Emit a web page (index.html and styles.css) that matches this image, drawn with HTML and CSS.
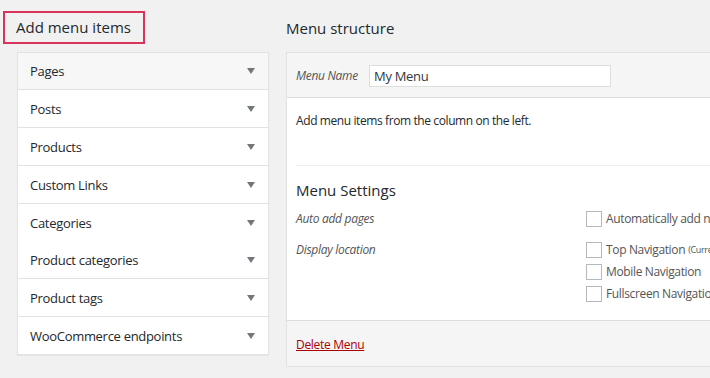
FILE: index.html
```html
<!DOCTYPE html>
<html lang="en">
<head>
    <meta charset="UTF-8">
    <title>Menus</title>
    <link rel="stylesheet" href="styles.css">
</head>
<body>
<div class="wrap">
    <!--左侧：添加菜单项-->
    <div class="col-left">
        <h2 class="title-box">Add menu items</h2>
        <ul class="accordion">
            <li class="acc-row first">Pages <span class="arrow"></span></li>
            <li class="acc-row">Posts <span class="arrow"></span></li>
            <li class="acc-row">Products <span class="arrow"></span></li>
            <li class="acc-row">Custom Links <span class="arrow"></span></li>
            <li class="acc-row no-line">Categories <span class="arrow"></span></li>
            <li class="acc-row short">Product categories <span class="arrow"></span></li>
            <li class="acc-row">Product tags <span class="arrow"></span></li>
            <li class="acc-row">WooCommerce endpoints <span class="arrow"></span></li>
        </ul>
    </div>

    <!--右侧：菜单结构-->
    <div class="col-right">
        <h2 class="title">Menu structure</h2>
        <div class="panel">
            <div class="panel-head">
                <label class="menu-name">Menu Name</label>
                <input type="text" class="name-input" value="My Menu">
            </div>
            <div class="panel-body">
                <p class="hint">Add menu items from the column on the left.</p>
                <h3 class="settings-title">Menu Settings</h3>
                <div class="setting">
                    <span class="setting-label">Auto add pages</span>
                    <div class="setting-opts">
                        <label class="opt"><span class="box"></span>Automatically add new top-level pages to this menu</label>
                    </div>
                </div>
                <div class="setting">
                    <span class="setting-label">Display location</span>
                    <div class="setting-opts">
                        <label class="opt"><span class="box"></span>Top Navigation <small>(Currently set to: Main)</small></label>
                        <label class="opt"><span class="box"></span>Mobile Navigation</label>
                        <label class="opt"><span class="box"></span>Fullscreen Navigation</label>
                    </div>
                </div>
            </div>
            <div class="panel-foot">
                <a href="#" class="delete">Delete Menu</a>
            </div>
        </div>
    </div>
</div>
</body>
</html>
```

FILE: styles.css
```css
body {
    margin: 0;
    background: #f1f1f1;
    font-family: "Open Sans", "Liberation Sans", sans-serif;
    color: #23282d;
    overflow: hidden;
}
.wrap {
    display: flex;
    gap: 17px;
    padding: 11px 0 0 3px;
    width: 1000px;
}
.col-left {
    width: 266px;
    flex-shrink: 0;
}
.title-box {
    margin: 0;
    border: 2px solid #d9325d;
    font-size: 15px;
    font-weight: 400;
    line-height: 29px;
    padding-left: 11px;
    box-sizing: border-box;
    height: 33px;
    width: 142px;
}
.accordion {
    list-style: none;
    margin: 8px 0 0 14px;
    padding: 0;
    width: 250px;
    border: 1px solid #e2e2e2;
    background: #fff;
    box-shadow: 0 1px 1px rgba(0,0,0,0.04);
}
.acc-row {
    height: 37px;
    border-bottom: 1px solid #e2e2e2;
    display: flex;
    align-items: center;
    justify-content: space-between;
    padding: 0 13px 0 12px;
    font-size: 13px;
    letter-spacing: -0.3px;
}
.acc-row.first {
    background: #f7f7f7;
    height: 36px;
}
.acc-row.short {
    height: 36px;
}
.acc-row.no-line {
    border-bottom-color: #fff;
}
.acc-row:last-child {
    border-bottom: none;
}
.arrow {
    width: 0;
    height: 0;
    border-left: 4px solid transparent;
    border-right: 4px solid transparent;
    border-top: 6px solid #72777c;
}
.col-right {
    width: 520px;
    flex-shrink: 0;
}
.title {
    margin: 0;
    height: 41px;
    line-height: 35px;
    font-size: 15px;
    font-weight: 500;
}
.panel {
    border: 1px solid #e2e2e2;
    background: #fff;
    box-shadow: 0 1px 1px rgba(0,0,0,0.04);
}
.panel-head {
    height: 44px;
    background: #f5f5f5;
    border-bottom: 1px solid #dddddd;
    display: flex;
    align-items: center;
    padding-left: 9px;
}
.menu-name {
    font-style: italic;
    font-size: 12px;
    letter-spacing: -0.3px;
    color: #555;
    width: 73px;
}
.name-input {
    width: 242px;
    height: 22px;
    box-sizing: border-box;
    border: 1px solid #dddddd;
    font-family: inherit;
    font-size: 13px;
    letter-spacing: -0.3px;
    padding: 0 4px;
    color: #32373c;
    margin-top: 1px;
}
.panel-body {
    padding: 0 0 10px 9px;
    height: 212px;
}
.hint {
    margin: 0;
    padding: 14px 0 0;
    height: 53px;
    font-size: 12px;
    letter-spacing: -0.4px;
    border-bottom: 1px solid #eeeeee;
}
.settings-title {
    margin: 14px 0 11px;
    font-size: 15px;
    font-weight: 500;
}
.setting {
    display: flex;
    margin-bottom: 15px;
}
.setting-label {
    width: 290px;
    flex-shrink: 0;
    font-style: italic;
    font-size: 12px;
    letter-spacing: -0.3px;
    color: #555;
    line-height: 16px;
}
.setting-opts {
    display: flex;
    flex-direction: column;
    gap: 6px;
}
.opt {
    display: flex;
    align-items: center;
    font-size: 12px;
    letter-spacing: -0.35px;
    line-height: 16px;
    color: #555;
    white-space: nowrap;
}
.box {
    width: 14px;
    height: 14px;
    flex-shrink: 0;
    border: 1px solid #b4b9be;
    background: #fff;
    margin-right: 4px;
}
.opt small {
    font-size: 9px;
    margin-left: 3px;
}
.panel-foot {
    height: 45px;
    background: #f5f5f5;
    border-top: 1px solid #dddddd;
    display: flex;
    align-items: center;
    padding-left: 9px;
}
.delete {
    color: #a00;
    font-size: 12px;
    letter-spacing: -0.3px;
    text-decoration: underline;
    margin-top: 1px;
}
```
